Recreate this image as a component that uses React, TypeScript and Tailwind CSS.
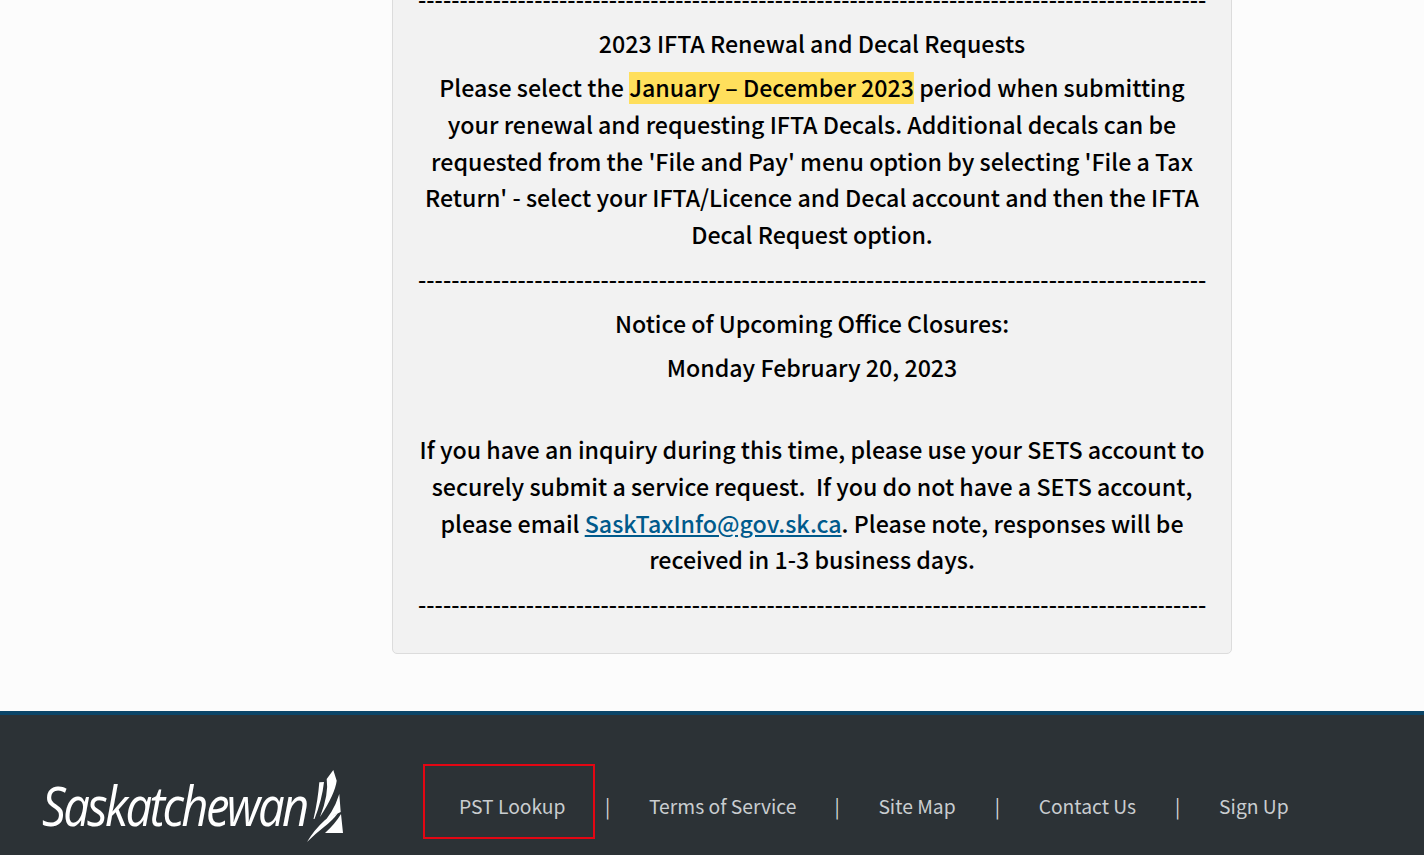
const bodyFont = '"Noto Sans CJK SC", "Source Sans Pro", "Noto Sans", sans-serif';
const dashes = '-'.repeat(95);

function Divider() {
  return <p className="whitespace-nowrap text-center leading-[37px] mb-[7px] tracking-[0.02px]">{dashes}</p>;
}

function Logo() {
  return (
    <div className="flex items-center w-[302px] h-[76px] text-white">
      <span className="text-[54px] leading-none font-normal italic tracking-[-3px] [font-family:'Open_Sans',sans-serif] scale-x-[0.875] origin-left w-[265px] whitespace-nowrap pt-[5px]">
        Saskatchewan
      </span>
      <svg viewBox="0 0 36 72" className="w-[36px] h-[72px] mt-[8px] shrink-0" fill="#fff">
        <path d="M26.3 0 L29.7 10.7 Q28 24 13 47 Q22 24 19.7 9Z" />
        <path d="M12.3 12.3 L17 12 Q15 30 7.5 49 L6.5 49 Q11 30 12.3 12.3Z" />
        <path d="M32.3 24 L33.7 42 Q22 47 13 56 Q26 44 32.3 24Z" />
        <path d="M34 44 L36 63 L18 63 Q28 54 34 44Z" />
        <path d="M0 72 Q7 60 18 50 Q24 46 31 43 Q26 50 17 57 Q8 64 0 72Z" />
      </svg>
    </div>
  );
}

function Sep() {
  return <span className="text-[#d5d8da] w-[4px] text-center pt-[8px]">|</span>;
}

export default function App() {
  return (
    <div className="h-[855px] overflow-hidden bg-[#fcfcfc] flex flex-col" style={{ fontFamily: bodyFont }}>
      <main className="h-[711px] shrink-0 pl-[392px]">
        <div className="w-[840px] h-[719px] -mt-[65px] bg-[#f2f2f2] border border-[#dcdcdc] rounded-[5px] px-[25px] pt-[45px] text-black text-[23.2px] font-medium text-center">
          <Divider />
          <p className="leading-[37px] mb-[7px]">2023 IFTA Renewal and Decal Requests</p>
          <p className="leading-[36.8px] mb-[8px]">
            Please select the <span className="bg-[linear-gradient(#ffdf5c,#ffdf5c)] bg-no-repeat bg-bottom bg-[length:100%_32px]">January – December 2023</span> period when submitting your renewal and requesting IFTA Decals. Additional decals can be requested from the 'File and Pay' menu option by selecting 'File a Tax Return' - select your IFTA/Licence and Decal account and then the IFTA Decal Request option.
          </p>
          <Divider />
          <p className="leading-[37px] mb-[7px]">Notice of Upcoming Office Closures:</p>
          <p className="leading-[37px] mb-[7px]">Monday February 20, 2023</p>
          <p className="leading-[36.8px] pt-[38px] mb-[8px]">
            If you have an inquiry during this time, please use your SETS account to securely submit a service request.{'\u00a0 '}If you do not have a SETS account, please email <a href="#" className="text-[#005a8c] underline">SaskTaxInfo@gov.sk.ca</a>. Please note, responses will be received in 1-3 business days.
          </p>
          <Divider />
        </div>
      </main>
      <footer className="flex-1 bg-[#2c3236] border-t-[4px] border-[#0b4568] text-[#c9cdd0] text-[19.3px] pl-[42px] pt-[49px]">
        <div className="flex items-center">
          <Logo />
          <nav className="flex items-center ml-[79px]">
            <a href="#" className="flex items-center border-2 border-[#e30613] h-[75px] w-[172px] pl-[34px] pt-[10px] -mt-[2px]">PST Lookup</a>
            <span className="w-[10px]" />
            <Sep />
            <a href="#" className="ml-[40px] pt-[8px]">Terms of Service</a>
            <span className="w-[38px]" />
            <Sep />
            <a href="#" className="ml-[40px] pt-[8px]">Site Map</a>
            <span className="w-[39px]" />
            <Sep />
            <a href="#" className="ml-[40px] pt-[8px]">Contact Us</a>
            <span className="w-[39px]" />
            <Sep />
            <a href="#" className="ml-[40px] pt-[8px]">Sign Up</a>
          </nav>
        </div>
      </footer>
    </div>
  );
}
